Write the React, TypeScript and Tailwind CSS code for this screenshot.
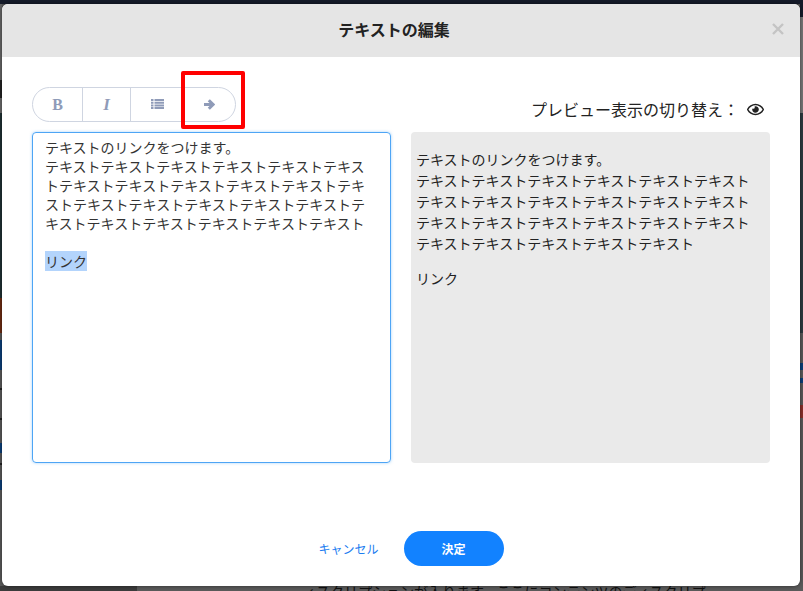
import { FaRegEye } from "react-icons/fa";

const jp = "font-['Noto_Sans_CJK_JP','Liberation_Sans',sans-serif]";
const unit = "テキスト";

const leftBands = [
  { top: 4, height: 76, color: "#666666" },
  { top: 80, height: 18, color: "#232323" },
  { top: 98, height: 15, color: "#6a6a6a" },
  { top: 113, height: 185, color: "#1f3033" },
  { top: 298, height: 35, color: "#6d2c12" },
  { top: 340, height: 30, color: "#0b3f7a" },
  { top: 388, height: 2, color: "#222222" },
  { top: 418, height: 2, color: "#222222" },
  { top: 443, height: 10, color: "#0b3f7a" },
  { top: 463, height: 2, color: "#222222" },
  { top: 480, height: 10, color: "#0b3f7a" },
];

const rightBands = [
  { top: 4, height: 13, color: "#151b2a" },
  { top: 17, height: 96, color: "#777777" },
  { top: 113, height: 220, color: "#2d3b40" },
  { top: 363, height: 7, color: "#0b3f7a" },
  { top: 378, height: 5, color: "#0b3f7a" },
  { top: 405, height: 13, color: "#8a2f2a" },
];

function ToolButton({ children, className }: { children: React.ReactNode; className: string }) {
  return (
    <button className={`flex h-full shrink-0 items-center justify-center text-[#8f9bb8] ${className}`}>
      {children}
    </button>
  );
}

export default function App() {
  const body = unit.repeat(23);
  return (
    <div className={`relative h-[591px] w-[803px] overflow-hidden bg-[#5a5a5a] ${jp}`}>
      <div className="absolute inset-x-0 top-0 h-[4px] bg-[#151b2a]" />
      <div className="absolute inset-y-0 left-0 w-[2px]">
        {leftBands.map((b) => (
          <div key={b.top} className="absolute inset-x-0" style={{ top: b.top, height: b.height, background: b.color }} />
        ))}
      </div>
      <div className="absolute inset-y-0 right-0 w-[3px]">
        {rightBands.map((b) => (
          <div key={b.top} className="absolute inset-x-0" style={{ top: b.top, height: b.height, background: b.color }} />
        ))}
      </div>
      <div className="absolute bottom-0 left-0 h-[5px] w-[137px] bg-[#3c3c3c]" />
      <div className="absolute left-[302px] top-[583px] whitespace-nowrap text-[14px] leading-[16px] text-[#111]">
        ィスクリプションが入ります。ここにコンテンツのディスクリプ
      </div>
      <div className="absolute left-[2px] top-[4px] flex h-[582px] w-[798px] flex-col overflow-hidden rounded-[6px] bg-white shadow-[0_0_4px_rgba(0,0,0,0.5)]">
        <header className="relative flex h-[53px] shrink-0 items-center justify-center bg-[#e5e5e5] pb-[3px] pr-[14px]">
          <h1 className="text-base font-bold text-[#222]">テキストの編集</h1>
          <span className="absolute right-[16px] top-[19px] text-[#c4c4c4]">
            <svg width="12" height="12" viewBox="0 0 12 12" fill="none" stroke="currentColor" strokeWidth="2.4">
              <path d="M1 1 11 11M11 1 1 11" />
            </svg>
          </span>
        </header>

        <div className="flex items-end justify-between pl-[30px] pr-[36px] pt-[30px]">
          <div className="flex h-[35px] w-[204px] overflow-hidden rounded-full border border-[#cfd5e1]">
            <ToolButton className="w-[50px] border-r border-[#cfd5e1]"><span className="font-['Liberation_Serif',serif] text-[16px] font-bold">B</span></ToolButton>
            <ToolButton className="w-[48px] border-r border-[#cfd5e1]"><span className="font-['Liberation_Serif',serif] text-[17px] font-bold italic">I</span></ToolButton>
            <ToolButton className="w-[52px]">
              <svg className="mb-[2px]" width="13" height="10" viewBox="0 0 13 10" fill="currentColor">
                <path d="M0 0h2.5v2H0zM3.5 0H13v2H3.5zM0 2.7h2.5v2H0zM3.5 2.7H13v2H3.5zM0 5.4h2.5v2H0zM3.5 5.4H13v2H3.5zM0 8h2.5v2H0zM3.5 8H13v2H3.5z" />
              </svg>
            </ToolButton>
            <ToolButton className="w-[52px]">
              <svg width="11" height="11" viewBox="0 0 11 11" fill="none" stroke="currentColor" strokeWidth="3">
                <path d="M0 5.5H9M4.8 1.2l4.3 4.3-4.3 4.3" />
              </svg>
            </ToolButton>
          </div>
          <div className="mb-[2px] flex items-center text-base leading-[22px] text-[#222]">
            プレビュー表示の切り替え：
            <FaRegEye className="ml-[8px] h-[17px] w-[17px]" />
          </div>
        </div>

        <div className="mt-[10px] flex gap-[20px] pl-[30px]">
          <div className="h-[331px] w-[359px] rounded-[4px] border border-[#4ea5f5] px-[12px] pt-[5px] text-[14px] leading-[19px] text-[#333] shadow-[0_0_3px_rgba(78,165,245,0.5)] break-all">
            テキストのリンクをつけます。
            <br />
            {body}
            <br />
            <br />
            <span className="bg-[#b3d4fc]">リンク</span>
          </div>
          <div className="h-[331px] w-[359px] rounded-[4px] bg-[#eaeaea] pl-[5px] pr-[16px] pt-[17px] text-[14px] leading-[21px] text-[#222] break-all">
            <p>テキストのリンクをつけます。<br />{body}</p>
            <p className="mt-[14px]">リンク</p>
          </div>
        </div>

        <footer className="mt-[68px] flex items-center justify-center gap-[25px] pl-[20px]">
          <button className="text-[12px] text-[#1a7cf0]">キャンセル</button>
          <button className="h-[35px] w-[100px] rounded-full bg-[#1282ff] text-[12px] font-bold text-white">決定</button>
        </footer>

        <div className="absolute left-[179px] top-[67px] h-[58px] w-[64px] rounded-[2px] border-[4px] border-[#ff0000]" />
      </div>
    </div>
  );
}
